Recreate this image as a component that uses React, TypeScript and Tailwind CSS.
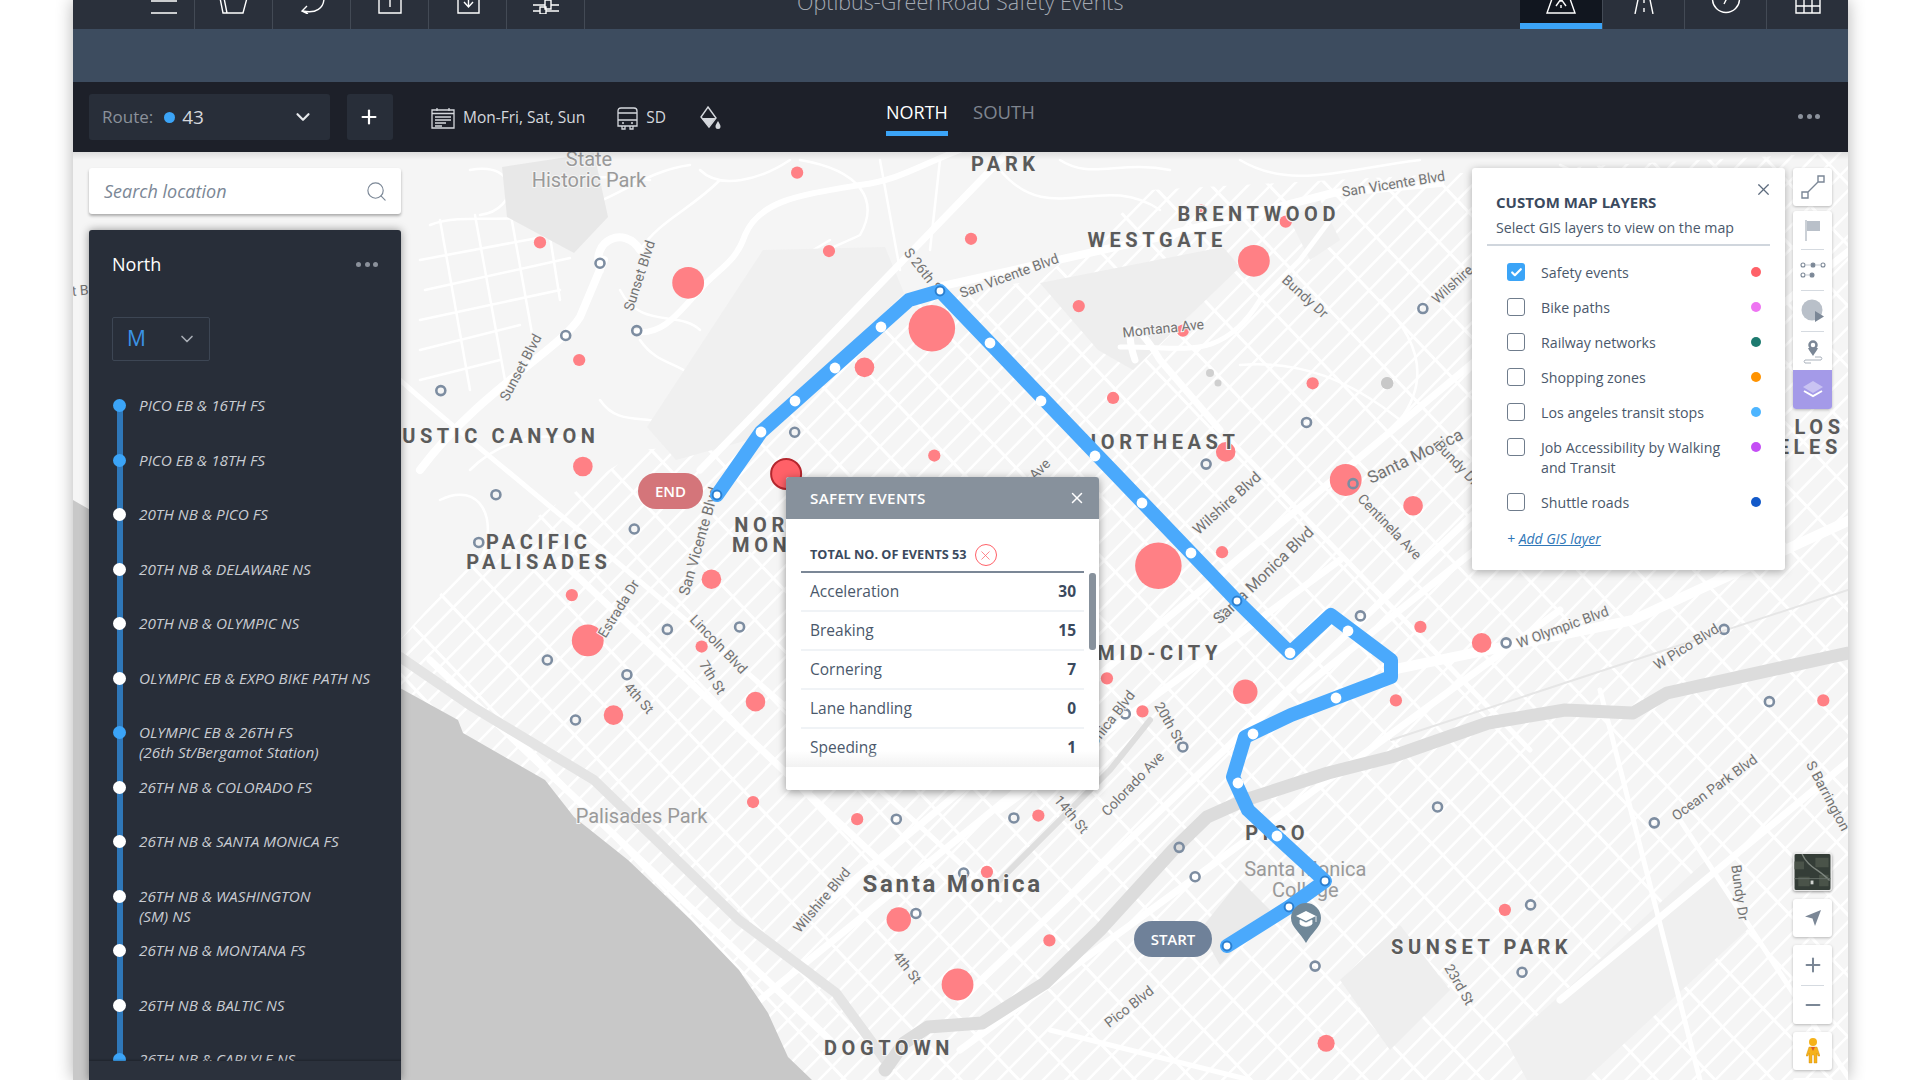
import { Check, ChevronDown, Minus, Plus, Search, X } from 'lucide-react'

const K = 1920 / 1568

const STOPS = [
  { name: 'PICO EB & 16TH FS', blue: true },
  { name: 'PICO EB & 18TH FS', blue: true },
  { name: '20TH NB & PICO FS' },
  { name: '20TH NB & DELAWARE NS' },
  { name: '20TH NB & OLYMPIC NS' },
  { name: 'OLYMPIC EB & EXPO BIKE PATH NS' },
  { name: 'OLYMPIC EB & 26TH FS', sub: '(26th St/Bergamot Station)', blue: true },
  { name: '26TH NB & COLORADO FS' },
  { name: '26TH NB & SANTA MONICA FS' },
  { name: '26TH NB & WASHINGTON', sub: '(SM) NS' },
  { name: '26TH NB & MONTANA FS' },
  { name: '26TH NB & BALTIC NS' },
  { name: '26TH NB & CARLYLE NS', blue: true },
]

const LAYERS = [
  { label: 'Safety events', color: 'bg-[#ff6168]', checked: true },
  { label: 'Bike paths', color: 'bg-[#ee74f2]' },
  { label: 'Railway networks', color: 'bg-[#1d7a6f]' },
  { label: 'Shopping zones', color: 'bg-[#ff9300]' },
  { label: 'Los angeles transit stops', color: 'bg-[#4db5ff]' },
  { label: 'Job Accessibility by Walking and Transit', color: 'bg-[#c44df5]' },
  { label: 'Shuttle roads', color: 'bg-[#1259c9]' },
]

const EVENTS = [
  { label: 'Acceleration', value: 30 },
  { label: 'Breaking', value: 15 },
  { label: 'Cornering', value: 7 },
  { label: 'Lane handling', value: 0 },
  { label: 'Speeding', value: 1 },
]

// marker positions, taken at 1568px wide
const RED = [
  [651, 141, 5], [793, 195, 5], [677, 205, 5], [441, 198, 5], [562, 231, 13], [761, 268, 19], [706, 300, 8],
  [473, 294, 5], [881, 250, 5], [981, 172, 5], [1050, 181, 5], [1024, 213, 13], [966, 270, 5], [909, 325, 5],
  [1072, 313, 5], [763, 372, 5], [476, 381, 8], [1001, 369, 8], [1099, 392, 13], [1154, 413, 8], [998, 451, 5],
  [946, 462, 19], [1160, 512, 5], [1210, 525, 8], [581, 473, 8], [467, 486, 5], [480, 523, 13], [573, 528, 5],
  [617, 573, 8], [501, 584, 8], [904, 554, 5], [1017, 565, 10], [933, 581, 5], [1140, 572, 5], [1489, 572, 5],
  [615, 655, 5], [700, 669, 5], [848, 666, 5], [806, 712, 5], [734, 751, 10], [857, 768, 5], [782, 804, 13],
  [1229, 743, 5], [1083, 852, 7],
]

const RINGS = [
  [490, 215], [462, 274], [520, 270], [360, 319], [405, 404], [391, 443], [518, 432], [447, 539], [512, 551],
  [470, 588], [545, 514], [604, 512], [649, 353], [1162, 252], [1067, 345], [985, 379], [1105, 395], [999, 502],
  [1111, 503], [1230, 525], [1408, 514], [1445, 573], [966, 610], [919, 583], [1174, 659], [1351, 672], [828, 668],
  [732, 669], [787, 713], [748, 746], [963, 692], [976, 716], [1074, 789], [1243, 794], [1250, 739],
]

const AREAS = [
  [1, 'State', 481, 130], [1, 'Historic Park', 481, 147], [1, 'Palisades Park', 524, 666],
  [1, 'Santa Monica', 1066, 710], [1, 'College', 1066, 727],
  [2, 'PARK', 821, 134], [2, 'BRENTWOOD', 1028, 175], [2, 'WESTGATE', 945, 196], [2, 'USTIC CANYON', 409, 356],
  [2, 'NORTHEAST', 948, 361], [2, 'PACIFIC', 440, 443], [2, 'PALISADES', 440, 459], [2, 'NOR', 622, 429],
  [2, 'MON', 622, 445], [2, 'MID-CITY', 947, 533], [2, 'PICO', 1043, 680], [2, 'SUNSET PARK', 1210, 773],
  [2, 'DOGTOWN', 726, 856], [2, 'LOS', 1486, 349], [2, 'ELES', 1478, 365],
] as const

const STREETS: [string, number, number, number, number?][] = [
  ['San Vicente Blvd', 1138, 150, -9], ['San Vicente Blvd', 824, 225, -20], ['S 26th St', 755, 222, 52],
  ['Sunset Blvd', 522, 225, -72], ['Sunset Blvd', 425, 300, -62], ['Montana Ave', 950, 268, -6], ['Bundy Dr', 1066, 242, 42],
  ['Wilshire', 1186, 232, -42], ['Santa Monica', 1156, 373, -26, 17], ['Bundy Dr', 1190, 378, 46], ['Centinela Ave', 1135, 430, 46],
  ['Wilshire Blvd', 1002, 411, -42, 15], ['Santa Monica Blvd', 1032, 470, -44, 16], ['Ave', 849, 383, -45],
  ['San Vicente Blvd', 571, 442, -74, 15], ['Estrada Dr', 505, 497, -58], ['Lincoln Blvd', 587, 526, 46], ['7th St', 582, 553, 58],
  ['4th St', 522, 570, 48], ['Monica Blvd', 905, 590, -52], ['20th St', 955, 590, 60], ['Colorado Ave', 925, 640, -46],
  ['14th St', 875, 665, 50], ['Wilshire Blvd', 671, 735, -50], ['4th St', 741, 790, 52], ['Pico Blvd', 922, 822, -38],
  ['23rd St', 1192, 804, 60], ['Bundy Dr', 1421, 729, 82], ['W Olympic Blvd', 1276, 512, -20], ['W Pico Blvd', 1377, 528, -32],
  ['Ocean Park Blvd', 1400, 643, -36], ['S Barrington', 1493, 650, 62], ['t B', 65.5, 237, -5],
]

const ROUTE = '1227,946 1289,907 1325,881 1277,837 1248,810 1233,777 1245,737 1291,715 1391,677 1391,660 1331,615 1290,653 1237,601 940,291 909,300 761,432 717,495'
const ROUTE_STOPS = [
  [881, 327], [835, 368], [795, 401], [761, 432], [990, 343], [1041, 401], [1095, 456], [1142, 503], [1191, 553],
  [1290, 653], [1348, 631], [1336, 698], [1253, 734], [1238, 783], [1277, 836],
]
const ROUTE_ENDS = [[940, 291], [717, 495], [1237, 601], [1325, 881], [1289, 907], [1227, 946]]

function gridPath(cx: number, cy: number, dx: number, dy: number, step: number, count: number) {
  const len = Math.hypot(dx, dy)
  const ux = dx / len
  const uy = dy / len
  let d = ''
  for (let i = -count; i <= count; i++) {
    const px = cx - uy * step * i
    const py = cy + ux * step * i
    d += `M${px - ux * 1500} ${py - uy * 1500}L${px + ux * 1500} ${py + uy * 1500}`
  }
  return d
}

function MapCanvas() {
  return (
    <svg className="absolute inset-0 h-full w-full" viewBox="73 152 1775 928">
      <defs>
        <clipPath id="city">
          <polygon points="73,560 400,640 470,560 640,450 760,440 900,300 1040,280 1150,190 1848,152 1848,1080 73,1080" />
        </clipPath>
      </defs>
      <rect x="73" y="152" width="1775" height="928" fill="#f5f5f5" />
      <g clipPath="url(#city)" fill="none" stroke="#ffffff">
        <path d={gridPath(1200, 600, 1, 1.05, 42, 36)} strokeWidth="3" />
        <path d={gridPath(1200, 600, 1, -1.02, 16, 84)} strokeWidth="2.5" />
      </g>
      {/* hills, drawn by hand */}
      <g fill="none" stroke="#ffffff" strokeWidth="2.5" strokeLinecap="round" strokeLinejoin="round">
        <path d="M420 260L580 230M425 290L570 258M420 320L560 290M420 350L520 325M420 380L500 360M440 220L470 390M475 215L505 380M510 210L535 350M545 205L560 300" />
        <path d="M430 225C470 210 520 230 590 205C620 195 650 170 690 165" />
        <path d="M640 250C660 220 690 210 720 180M700 170C720 190 760 180 790 160M800 160C860 170 880 200 860 235M860 235C830 250 800 255 790 290M780 270L830 240M880 160L900 270M940 160L930 250" />
        <path d="M470 170C520 160 520 210 480 215M530 165C590 190 580 170 650 180M620 290C640 330 680 310 700 330M640 340C660 370 690 360 700 390M600 400C620 430 650 410 680 430M470 470C500 440 540 430 590 440M440 500C480 480 500 520 480 560" />
        <path d="M1000 170C1050 230 1100 170 1160 210M1060 160C1090 180 1120 160 1170 170M1240 160C1290 190 1340 170 1420 160M1500 170L1640 240M1560 165L1700 230M1240 365C1300 360 1350 380 1400 420C1430 380 1420 340 1380 300" />
      </g>
      <polygon points="647,427 763,250 885,247 904,293 759,437 676,460" fill="#f0f0f0" />
      <polygon points="502,167 594,153 608,217 574,253 507,217" fill="#e8e8e8" />
      <polygon points="1040,283 1223,247 1240,267 1133,370 1098,350" fill="#eeeeee" />
      <polygon points="1507,1043 1585,973 1706,860 1750,927 1585,1080 1527,1080" fill="#f0f0f0" />
      <polygon points="1340,980 1400,925 1450,990 1390,1050" fill="#eeeeee" />
      <polygon points="1200,930 1240,880 1270,910 1220,965" fill="#eaeaea" />
      <polygon points="1290,220 1320,200 1340,240 1310,260" fill="#f0f0f0" />
      <g fill="none" stroke="#ffffff" strokeWidth="7" strokeLinecap="round" strokeLinejoin="round">
        <path d="M600 270C590 240 625 225 640 250M604 260L580 317C560 350 480 390 420 470" strokeWidth="8" />
        <path d="M637 332C665 335 680 310 700 290C715 270 735 265 745 235C760 200 800 195 860 185C900 180 920 165 960 150" strokeWidth="6" />
        <path d="M938 287L1160 237L1333 193L1440 183" strokeWidth="8" />
        <path d="M1120 347C1180 345 1220 365 1260 300L1300 260L1330 220" strokeWidth="5" />
        <path d="M700 470L1010 150M830 900L1560 290M960 1000L1700 300M1135 360C1125 330 1130 310 1160 360L1220 430" />
        <path d="M1391 670L1633 620L1850 520" strokeWidth="10" />
        <path d="M1000 810L1340 560M1300 690L1850 250M760 1000L1030 780M430 660L830 1040M560 560L900 880M960 1050L1560 610M1560 1000L1850 760" />
        <path d="M400 380C500 470 700 620 1000 900M1230 440L1530 750M1600 690L1700 1080M1680 820L1850 1080M1050 1030L1250 1080" strokeWidth="5" />
      </g>
      <circle cx="1387" cy="383" r="6" fill="#c8c8c8" />
      <circle cx="1210" cy="373" r="4" fill="#d0d0d0" />
      <circle cx="1218" cy="383" r="3.5" fill="#cfcfcf" />
      <g fill="none" strokeLinejoin="round" strokeLinecap="round">
        <path d="M400 657L473 707L594 780L739 920L836 993L885 1060" stroke="#e4e4e4" strokeWidth="10" />
        <path d="M1848 653L1667 693L1633 713L1565 710L1488 723L1391 757L1328 773L1245 800L1207 817L1173 850L1100 930L1045 983L982 1023L928 1027L904 1043L885 1070" stroke="#dcdcdc" strokeWidth="13" />
        <path d="M1000 880L1110 770L1150 720" stroke="#dedede" strokeWidth="6" />
        <path d="M1848 590L1391 740" stroke="#e6e6e6" strokeWidth="2" />
      </g>
      <polygon points="73,500 400,688 458,720 463,733 545,780 574,817 628,860 691,920 739,970 768,1013 788,1057 812,1080 73,1080" fill="#c8c8c8" />
      {RED.map(([x, y, r], i) => (
        <circle key={i} cx={x * K} cy={y * K} r={r * K} fill="#ff8085" />
      ))}
      {RINGS.map(([x, y], i) => (
        <circle key={i} cx={x * K} cy={y * K} r="4.5" fill="none" stroke="#7d8da1" strokeWidth="2.6" />
      ))}
      <circle cx={1133 * K} cy={313 * K} r="6" fill="#c8c8c8" />
      {AREAS.map(([kind, text, x, y], i) =>
        kind === 1 ? (
          <text key={i} x={x * K} y={y * K + 7} textAnchor="middle" fontFamily="Roboto, sans-serif" fontSize="20" fill="#9a9a9a" stroke="#f5f5f5" strokeWidth="2" paintOrder="stroke">
            {text}
          </text>
        ) : (
          <text key={i} x={x * K} y={y * K + 7} textAnchor="middle" fontFamily="Roboto, sans-serif" fontSize="20" fontWeight="700" letterSpacing="4.6" fill="#5b5b5b" stroke="#f5f5f5" strokeWidth="2" paintOrder="stroke">
            {text}
          </text>
        ),
      )}
      <text x={778 * K} y={722 * K + 8} textAnchor="middle" fontFamily="Roboto, sans-serif" fontSize="24" fontWeight="700" letterSpacing="2.7" fill="#5b5b5b" stroke="#f5f5f5" strokeWidth="2" paintOrder="stroke">
        Santa Monica
      </text>
      {STREETS.map(([text, x, y, rot, size], i) => (
        <text key={i} transform={`translate(${x * K} ${y * K}) rotate(${rot})`} y="5" textAnchor="middle" fontFamily="Roboto, sans-serif" fontSize={size ?? 14} fill="#737373" stroke="#f5f5f5" strokeWidth="2" paintOrder="stroke">
          {text}
        </text>
      ))}
      <polyline points={ROUTE} fill="none" stroke="#4aa9fc" strokeWidth="14" strokeLinejoin="round" strokeLinecap="round" />
      {ROUTE_STOPS.map(([x, y], i) => (
        <circle key={i} cx={x} cy={y} r="5.4" fill="#ffffff" />
      ))}
      {ROUTE_ENDS.map(([x, y], i) => (
        <circle key={i} cx={x} cy={y} r="4.4" fill="#ffffff" stroke="#2b7fd0" strokeWidth="2" />
      ))}
      <circle cx={642 * K} cy={387 * K} r="15" fill="#ff6168" stroke="#b4272e" strokeWidth="2" />
      {/* college pin */}
      <path d="M1306 903a15 15 0 0 1 15 15c0 9-9 14-15 25c-6-11-15-16-15-25a15 15 0 0 1 15-15z" fill="#6f8798" />
      <path d="M1306 911l10 5l-10 5l-10-5z" fill="#ffffff" />
      <path d="M1300 920v4c3 3 9 3 12 0v-4l-6 3zM1316 916v6" fill="#ffffff" stroke="#ffffff" strokeWidth="0.8" />
    </svg>
  )
}

function Pill({ label, className }: { label: string; className: string }) {
  return (
    <div className={`absolute flex h-[36px] items-center justify-center rounded-[18px] text-[15px] font-semibold text-white ${className}`}>{label}</div>
  )
}

function TopIcon({ children, w = 30 }: { children: React.ReactNode; w?: number }) {
  return (
    <svg width={w} height="30" viewBox={`0 0 ${w} 30`} fill="none" stroke="#ffffff" strokeWidth="1.4" className="-mt-[16px]">
      {children}
    </svg>
  )
}

const LEFT_TOOLS = [
  <TopIcon key="menu"><path d="M2 17h26M2 29h26M2 5h26" /></TopIcon>,
  <TopIcon key="page"><path d="M1 14l3 15h20l4-15M5 14l3 15" /></TopIcon>,
  <TopIcon key="undo"><path d="M27 14c0 10-8 16-21 13M10 22l-5 5l6 3" /></TopIcon>,
  <TopIcon key="up"><path d="M4 10h22v19h-22zM15 10v13" /></TopIcon>,
  <TopIcon key="down"><path d="M5 8h21v21h-21zM15.5 8v14M11 18l4.500 5l4.500-5" /></TopIcon>,
  <TopIcon key="sliders"><path d="M2 21h12M20 21h8M2 27h7M15 27h13M14 16h6v9h-6zM9 23h6v7h-6z" /></TopIcon>,
]

const RIGHT_TOOLS = [
  <svg key="map" width="34" height="30" viewBox="0 0 34 30" fill="none" stroke="#ffffff" strokeWidth="1.4" className="-mt-[12px]"><path d="M9 8l-6 17h28l-6-17M17 12v2M17 17v3M3 25h28" /><path d="M12 18l5-7l5 7" /></svg>,
  <svg key="road" width="34" height="30" viewBox="0 0 34 30" fill="none" stroke="#ffffff" strokeWidth="1.4" className="-mt-[16px]"><path d="M13 6l-5 24M21 6l5 24M17 14v5M17 24v4" /></svg>,
  <svg key="clock" width="30" height="30" viewBox="0 0 30 30" fill="none" stroke="#ffffff" strokeWidth="1.4" className="-mt-[16px]"><circle cx="15" cy="15" r="13.500" /><path d="M15 8v8l-2 4" /></svg>,
  <svg key="grid" width="30" height="30" viewBox="0 0 30 30" fill="none" stroke="#ffffff" strokeWidth="1.4" className="-mt-[16px]"><path d="M3 8h24v21h-24zM3 15h24M3 22h24M11 8v21M19 8v21" /></svg>,
]

function TopBar() {
  return (
    <div className="relative flex h-[29px] shrink-0 overflow-hidden bg-[#2a303b]">
      <div className="flex">
        <div className="flex h-[29px] w-[122px] items-start justify-center overflow-hidden border-r border-[#434a55] pl-[60px]">{LEFT_TOOLS[0]}</div>
        {LEFT_TOOLS.slice(1).map((icon, i) => (
          <div key={i} className="flex h-[29px] w-[78px] items-start justify-center overflow-hidden border-r border-[#434a55]">{icon}</div>
        ))}
      </div>
      <div className="absolute left-[724px] top-[-14px] text-[21.500px] font-light leading-[32px] text-[#a3a9b2]">Optibus-GreenRoad Safety Events</div>
      <div className="ml-auto flex">
        {RIGHT_TOOLS.map((icon, i) => (
          <div key={i} className={`flex h-[29px] w-[82px] items-start justify-center overflow-hidden ${i === 0 ? 'border-b-[6px] border-[#3ba4f7] bg-[#11161f]' : 'border-l border-[#434a55]'}`}>{icon}</div>
        ))}
      </div>
    </div>
  )
}

function Toolbar() {
  return (
    <div className="flex h-[70px] shrink-0 bg-[#1d2029] pt-[12px]">
      <div className="ml-[16px] flex h-[46px] w-[241px] items-center rounded-[3px] bg-[#282e39] pl-[13px] pr-[16px]">
        <span className="text-[17px] text-[#8b919b]">Route:</span>
        <span className="ml-[11px] h-[11px] w-[11px] rounded-full bg-[#3ba4f7]" />
        <span className="ml-[7px] text-[19px] text-[#d5d8dd]">43</span>
        <ChevronDown className="ml-auto h-[22px] w-[22px] text-[#e6e8eb]" strokeWidth={2.4} />
      </div>
      <div className="ml-[17px] flex h-[46px] w-[46px] items-center justify-center rounded-[3px] bg-[#282e39]">
        <Plus className="-ml-[2px] h-[22px] w-[22px] text-white" strokeWidth={2.4} />
      </div>
      <div className="ml-[38px] mt-[13px] flex h-[22px] items-center">
        <svg width="24" height="22" viewBox="0 0 24 22" fill="none" stroke="#d5d8dd" strokeWidth="1.3">
          <path d="M1 3h22v18h-22zM1 6.500h22M6 1v3M18 1v3M4 10h16M4 13h16M4 16h11M4 19h7" />
        </svg>
        <span className="ml-[8px] text-[15.500px] text-[#d5d8dd]">Mon-Fri, Sat, Sun</span>
      </div>
      <div className="ml-[32px] mt-[13px] flex h-[22px] items-center">
        <svg width="21" height="23" viewBox="0 0 21 23" fill="none" stroke="#d5d8dd" strokeWidth="1.3">
          <path d="M1 4c0-2 1-3 3-3h13c2 0 3 1 3 3v15h-19zM1 6h19M1 13h19M5 19v3h3v-3M13 19v3h3v-3M5 16h2M14 16h2" />
        </svg>
        <span className="ml-[8px] text-[15.500px] text-[#d5d8dd]">SD</span>
      </div>
      <svg width="22" height="24" viewBox="0 0 22 24" className="ml-[33px] mt-[12px]">
        <path d="M9 1l8 11l-7 9l-8-10z" fill="none" stroke="#d5d8dd" strokeWidth="1.4" />
        <path d="M2.500 12h14l-6.500 8.500z" fill="#d5d8dd" />
        <path d="M19 15c1.500 2.500 2.500 4 2.500 5.500a2.500 2.500 0 0 1-5 0c0-1.500 1-3 2.500-5.500z" fill="#d5d8dd" />
      </svg>
      <div className="ml-[165px] flex">
        <div className="flex h-[58px] w-[62px] flex-col items-center pt-[6px]">
          <span className="text-[18px] leading-[24px] text-white">NORTH</span>
          <span className="mt-[7px] h-[5px] w-full bg-[#3ba4f7]" />
        </div>
        <div className="ml-[25px] pt-[6px] text-[18.500px] leading-[24px] text-[#7f858f]">SOUTH</div>
      </div>
      <div className="ml-auto mr-[28px] mt-[20px] flex gap-[3.500px]">
        <span className="h-[5px] w-[5px] rounded-full bg-[#8b919b]" />
        <span className="h-[5px] w-[5px] rounded-full bg-[#8b919b]" />
        <span className="h-[5px] w-[5px] rounded-full bg-[#8b919b]" />
      </div>
    </div>
  )
}

function RouteOverlay() {
  return (
    <div className="absolute bottom-0 left-[16px] top-[16px] flex w-[312px] flex-col gap-[16px]">
      <div className="flex h-[46px] shrink-0 items-center rounded-[3px] bg-white pl-[15px] pr-[13px] shadow-[0_2px_3px_rgba(0,0,0,0.3)]">
        <span className="text-[18px] italic text-[#7b8796]">Search location</span>
        <Search className="ml-auto h-[23px] w-[23px] text-[#7b8796]" strokeWidth={1.2} />
      </div>
      <div className="relative flex min-h-0 flex-1 flex-col overflow-hidden rounded-t-[3px] bg-[#282e39] shadow-[0_0_8px_rgba(0,0,0,0.4)]">
        <div className="flex h-[68px] shrink-0 items-center px-[23px]">
          <span className="text-[18px] text-white">North</span>
          <div className="ml-auto flex gap-[3.500px]">
            <span className="h-[5px] w-[5px] rounded-full bg-[#8b919b]" />
            <span className="h-[5px] w-[5px] rounded-full bg-[#8b919b]" />
            <span className="h-[5px] w-[5px] rounded-full bg-[#8b919b]" />
          </div>
        </div>
        <div className="ml-[23px] mt-[19px] flex h-[44px] w-[98px] shrink-0 items-center rounded-[2px] border border-[#3d4654] pl-[14px] pr-[12px]">
          <span className="text-[21px] text-[#3b94e6]">M</span>
          <ChevronDown className="ml-auto h-[20px] w-[20px] text-[#a8adb5]" strokeWidth={2} />
        </div>
        <div className="relative ml-[24px] mt-[34px]">
          <span className="absolute bottom-0 left-[4px] top-[10px] w-[5.500px] bg-[#2f77b8]" />
          {STOPS.map((stop) => (
            <div key={stop.name} className="relative flex h-[54.500px] pl-[26px] text-[15.300px] italic leading-[20px] text-[#c8ccd2]">
              <span className={`absolute left-0 top-[4px] h-[13px] w-[13px] rounded-full ${stop.blue ? 'bg-[#3ba4f7]' : 'bg-white'}`} />
              <div>
                <div>{stop.name}</div>
                {stop.sub && <div>{stop.sub}</div>}
              </div>
            </div>
          ))}
        </div>
        <div className="absolute inset-x-0 bottom-0 h-[19px] bg-[#2b313c] shadow-[0_-1px_2px_rgba(0,0,0,0.25)]" />
      </div>
    </div>
  )
}

function SafetyEvents() {
  return (
    <div className="absolute left-[713px] top-[325px] flex h-[313px] w-[313px] flex-col overflow-hidden rounded-[3px] bg-white shadow-[0_2px_8px_rgba(0,0,0,0.4)]">
      <div className="flex h-[42px] shrink-0 items-center justify-between bg-[#87919c] pl-[24px] pr-[13px]">
        <span className="text-[15.200px] font-semibold tracking-[0.3px] text-white">SAFETY EVENTS</span>
        <X className="h-[18px] w-[18px] text-white" strokeWidth={2} />
      </div>
      <div className="mx-[15px] flex h-[54px] shrink-0 items-center border-b-2 border-[#7b8796] pl-[9px] pt-[20px]">
        <span className="text-[12.700px] font-bold text-[#3b4a5e]">TOTAL NO. OF EVENTS 53</span>
        <span className="ml-[8px] flex h-[22px] w-[22px] items-center justify-center rounded-full border border-[#ff6168]">
          <X className="h-[15px] w-[15px] text-[#ff6168]" strokeWidth={1.2} />
        </span>
      </div>
      <div className="relative min-h-0 flex-1">
        <div className="mx-[15px]">
          {EVENTS.map((e) => (
            <div key={e.label} className="flex h-[39px] items-center justify-between border-b-2 border-[#f0f3f6] pl-[9px] pr-[8px] text-[15.500px] text-[#4a586b]">
              <span>{e.label}</span>
              <span className="font-bold text-[#3b4a5e]">{e.value}</span>
            </div>
          ))}
        </div>
        <span className="absolute right-[3px] top-0 h-[77px] w-[7px] rounded-[3px] bg-[#87919c]" />
        <div className="absolute inset-x-0 top-[178px] h-[39px] bg-gradient-to-b from-transparent from-0% via-[#f2f2f2] via-40% to-white to-40%" />
      </div>
    </div>
  )
}

function LayersCard() {
  return (
    <div className="absolute left-[1399px] top-[16px] h-[402px] w-[313px] rounded-[3px] bg-white shadow-[0_2px_8px_rgba(0,0,0,0.3)]">
      <X className="absolute right-[12px] top-[12px] h-[19px] w-[19px] text-[#5d6b7d]" strokeWidth={1.5} />
      <div className="mx-[15px] border-b-2 border-[#d0d6dd] px-[9px] pb-[3px] pt-[22px]">
        <div className="text-[15px] font-bold leading-[24px] text-[#3b4a5e]">CUSTOM MAP LAYERS</div>
        <div className="mt-[1px] text-[14.200px] leading-[26px] text-[#4a586b]">Select GIS layers to view on the map</div>
      </div>
      <div className="mt-[17px]">
        {LAYERS.map((layer) => (
          <div key={layer.label} className="mb-[15px] flex min-h-[20px] pl-[35px] pr-[24px] text-[14.200px] leading-[20px] text-[#4a586b]">
            <span className={`flex h-[18px] w-[18px] shrink-0 items-center justify-center rounded-[3px] ${layer.checked ? 'bg-[#3ba4f7]' : 'border border-[#6f7c8c]'}`}>
              {layer.checked && <Check className="h-[13px] w-[13px] text-white" strokeWidth={4} />}
            </span>
            <span className="ml-[16px] w-[190px]">{layer.label}</span>
            <span className={`ml-auto mt-[4px] h-[10px] w-[10px] shrink-0 rounded-full ${layer.color}`} />
          </div>
        ))}
      </div>
      <div className="pl-[35px] text-[14px] italic text-[#2f77b8]">
        + <span className="underline">Add GIS layer</span>
      </div>
    </div>
  )
}

function ToolBtn({ children, className = '' }: { children: React.ReactNode; className?: string }) {
  return <div className={`flex items-center justify-center ${className}`}>{children}</div>
}

function RightTools() {
  return (
    <div className="absolute bottom-0 left-[1720px] top-[16px] flex w-[39px] flex-col">
      <ToolBtn className="h-[38px] rounded-[3px] bg-white shadow-[0_1px_3px_rgba(0,0,0,0.25)]">
        <svg width="26" height="26" viewBox="0 0 26 26" fill="none" stroke="#7b8796" strokeWidth="1.4">
          <path d="M2 18h6v6h-6zM18 2h6v6h-6zM8 18l10-10" />
        </svg>
      </ToolBtn>
      <div className="mt-[5px] flex flex-col overflow-hidden rounded-[3px] bg-white shadow-[0_1px_3px_rgba(0,0,0,0.25)]">
        <ToolBtn className="h-[38px]">
          <svg width="20" height="22" viewBox="0 0 20 22"><path d="M3 1v21" stroke="#aab2bc" strokeWidth="1.200" /><path d="M4 2h13v10h-13z" fill="#b9c0c9" /></svg>
        </ToolBtn>
        <div className="mx-[8px] h-px bg-[#d5dae0]" />
        <ToolBtn className="h-[40px]">
          <svg width="26" height="18" viewBox="0 0 26 18" fill="none" stroke="#7b8796" strokeWidth="1.100">
            <circle cx="3" cy="4" r="2" /><circle cx="13" cy="4" r="2" fill="#7b8796" /><circle cx="23" cy="4" r="2" />
            <circle cx="3" cy="14" r="2" /><circle cx="12" cy="14" r="2" fill="#7b8796" />
            <path d="M5 4h6M15 4h6M5 14h5" stroke="#c2c8cf" />
          </svg>
        </ToolBtn>
        <div className="mx-[8px] h-px bg-[#d5dae0]" />
        <ToolBtn className="h-[40px]">
          <svg width="24" height="24" viewBox="0 0 24 24"><circle cx="11" cy="11" r="10.500" fill="#b9c0c9" /><path d="M14 12l9 5.500l-9 5.500z" fill="#7b8796" /></svg>
        </ToolBtn>
        <div className="mx-[8px] h-px bg-[#d5dae0]" />
        <ToolBtn className="h-[38px]">
          <svg width="22" height="26" viewBox="0 0 22 26" fill="none">
            <circle cx="11" cy="7" r="3.500" stroke="#7b8796" strokeWidth="2.500" />
            <path d="M6 10c1 3 3.500 5 5 8c1.500-3 4-5 5-8" fill="#7b8796" />
            <path d="M13 19h6a2 2 0 0 1 0 3h-16a2 2 0 0 0 0 3h6" stroke="#aab2bc" strokeWidth="1" />
          </svg>
        </ToolBtn>
        <ToolBtn className="h-[39px] bg-[#a49ae8]">
          <svg width="22" height="20" viewBox="0 0 22 20"><path d="M11 1l10 6l-10 6l-10-6z" fill="#c9c3f2" /><path d="M2 11l9 5l9-5" fill="none" stroke="#ffffff" strokeWidth="2" /></svg>
        </ToolBtn>
      </div>
      <div className="mt-auto flex flex-col gap-[8px]">
        <div className="h-[38px] overflow-hidden rounded-[3px] border border-[#e8e8e8] shadow-[0_1px_3px_rgba(0,0,0,0.4)]">
          <svg viewBox="0 0 38 38" className="h-full w-full">
            <rect width="38" height="38" fill="#343d37" />
            <path d="M0 8h10v8h-10zM22 4h14v10h-14zM4 24h12v10h-12zM26 22h10v12h-10z" fill="#4a5349" />
            <path d="M8 0C14 14 26 16 37 28" fill="none" stroke="#7d857e" strokeWidth="1.500" />
            <path d="M0 26h38" stroke="#667069" strokeWidth="1" />
            <rect x="17" y="28" width="3" height="4" fill="#cfd2cf" />
          </svg>
        </div>
        <ToolBtn className="h-[38px] rounded-[3px] bg-white shadow-[0_1px_3px_rgba(0,0,0,0.25)]">
          <svg width="18" height="18" viewBox="0 0 18 18"><path d="M17 1l-6 16l-2.500-7.500l-7.500-2z" fill="#7b8796" /></svg>
        </ToolBtn>
        <div className="flex h-[79px] flex-col rounded-[3px] bg-white shadow-[0_1px_3px_rgba(0,0,0,0.25)]">
          <ToolBtn className="h-[40px]"><Plus className="h-[22px] w-[22px] text-[#7b8796]" strokeWidth={2.200} /></ToolBtn>
          <div className="mx-[8px] h-px bg-[#d5dae0]" />
          <ToolBtn className="h-[38px]"><Minus className="h-[22px] w-[22px] text-[#7b8796]" strokeWidth={2.200} /></ToolBtn>
        </div>
        <ToolBtn className="h-[38px] rounded-[3px] bg-white shadow-[0_1px_3px_rgba(0,0,0,0.25)]">
          <svg width="14" height="26" viewBox="0 0 14 26">
            <circle cx="7" cy="4" r="4" fill="#f5b21a" />
            <path d="M3 9h8l3 9h-2l-1-3v10h-3v-8h-2v8h-3v-10l-1 3h-2z" fill="#f5b21a" stroke="#cf8a0a" strokeWidth="0.4" />
            <path d="M5 9l2 4l2-4z" fill="#e0562a" />
          </svg>
        </ToolBtn>
        <div className="h-[2px] rounded-t-[3px] bg-white" />
      </div>
    </div>
  )
}

export default function App() {
  return (
    <div className="h-[1080px] w-full overflow-hidden bg-white pl-[73px] pr-[72px] font-['Open_Sans',sans-serif]">
      <div className="flex h-full flex-col shadow-[0_0_16px_rgba(0,0,0,0.3)]">
        <TopBar />
        <div className="h-[53px] shrink-0 bg-[#3d4c5f]" />
        <Toolbar />
        <div className="relative min-h-0 flex-1 overflow-hidden">
          <MapCanvas />
          <div className="absolute inset-x-0 top-0 h-[8px] bg-gradient-to-b from-[#00000018] to-transparent" />
          <RouteOverlay />
          <Pill label="END" className="left-[565px] top-[321px] w-[65px] bg-[#d4757a]" />
          <Pill label="START" className="left-[1061px] top-[769px] w-[78px] bg-[#6f8199]" />
          <SafetyEvents />
          <LayersCard />
          <RightTools />
        </div>
      </div>
    </div>
  )
}
